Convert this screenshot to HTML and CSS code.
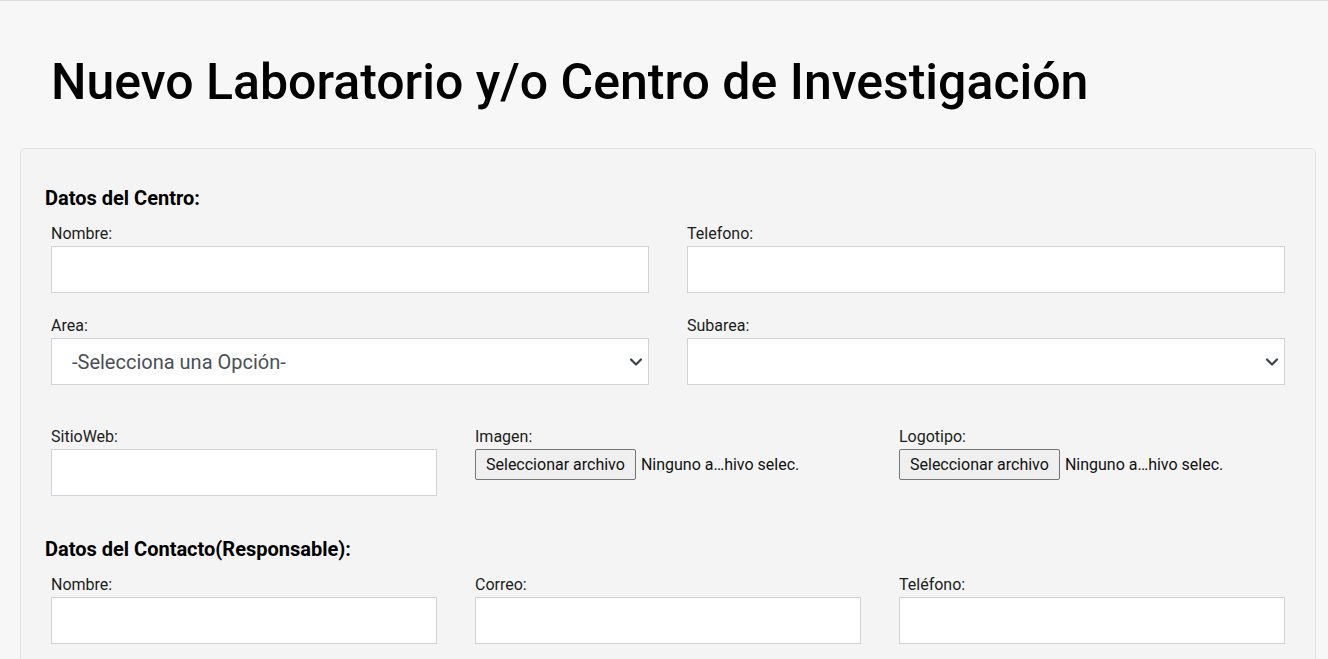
FILE: index.html
```html
<!DOCTYPE html>
<html lang="es">
<head>
<meta charset="utf-8">
<title>Nuevo Laboratorio</title>
<link rel="stylesheet" href="styles.css">
</head>
<body>
<div class="topline"></div>
<header class="page-head">
  <h1 class="title">Nuevo Laboratorio y/o Centro de Investigación</h1>
</header>
<main class="card">
  <h3 class="section-title">Datos del Centro:</h3>
  <div class="grid two">
    <div class="field"><label class="lbl">Nombre:</label><input class="ctl" type="text"></div>
    <div class="field"><label class="lbl">Telefono:</label><input class="ctl" type="text"></div>
  </div>
  <div class="grid two row-gap">
    <div class="field"><label class="lbl">Area:</label>
      <div class="ctl select"><span class="sel-text">-Selecciona una Opción-</span><svg class="chev" width="14" height="10" viewBox="0 0 14 10"><path d="M2 2.5 L7 7.5 L12 2.5" fill="none" stroke="#3d4348" stroke-width="2.2" stroke-linecap="round" stroke-linejoin="round"/></svg></div>
    </div>
    <div class="field"><label class="lbl">Subarea:</label>
      <div class="ctl select"><span class="sel-text"></span><svg class="chev" width="14" height="10" viewBox="0 0 14 10"><path d="M2 2.5 L7 7.5 L12 2.5" fill="none" stroke="#3d4348" stroke-width="2.2" stroke-linecap="round" stroke-linejoin="round"/></svg></div>
    </div>
  </div>
  <div class="grid three row-gap-lg">
    <div class="field"><label class="lbl">SitioWeb:</label><input class="ctl" type="text"></div>
    <div class="field"><label class="lbl">Imagen:</label>
      <div class="file"><span class="file-btn">Seleccionar archivo</span><span class="file-name">Ninguno a…hivo selec.</span></div>
    </div>
    <div class="field"><label class="lbl">Logotipo:</label>
      <div class="file"><span class="file-btn">Seleccionar archivo</span><span class="file-name">Ninguno a…hivo selec.</span></div>
    </div>
  </div>
  <h3 class="section-title second">Datos del Contacto(Responsable):</h3>
  <div class="grid three">
    <div class="field"><label class="lbl">Nombre:</label><input class="ctl" type="text"></div>
    <div class="field"><label class="lbl">Correo:</label><input class="ctl" type="text"></div>
    <div class="field"><label class="lbl">Teléfono:</label><input class="ctl" type="text"></div>
  </div>
</main>
</body>
</html>
```
FILE: styles.css
```css
html, body {
  margin: 0;
  padding: 0;
  background: #f7f7f7;
  font-family: Roboto, "Liberation Sans", Arial, sans-serif;
  color: #212529;
  overflow: hidden;
}
.topline {
  height: 1px;
  background: #d9dee5;
}
.page-head {
  padding: 50px 0 0 51px;
}
.title {
  margin: 0;
  font-size: 50px;
  font-weight: 500;
  line-height: 62px;
  color: #000;
}
.card {
  margin: 35px 12px 0 20px;
  background: #f4f4f4;
  border: 1px solid #e2e2e2;
  border-radius: 5px;
  padding: 37px 24px 30px;
  height: 600px;
  box-sizing: border-box;
}
.section-title {
  margin: 0 0 14px;
  font-size: 20px;
  font-weight: 700;
  line-height: 24px;
  color: #000;
}
.section-title.second {
  margin-top: 41px;
}
.grid {
  display: grid;
  column-gap: 38px;
  padding: 0 6px;
}
.grid.two { grid-template-columns: 1fr 1fr; }
.grid.three { grid-template-columns: 1fr 1fr 1fr; }
.row-gap { margin-top: 23px; }
.row-gap-lg { margin-top: 42px; }
.field {
  display: flex;
  flex-direction: column;
}
.lbl {
  display: block;
  font-size: 16px;
  line-height: 19px;
  margin-bottom: 3px;
  color: #1a1d20;
}
.ctl {
  box-sizing: border-box;
  height: 47px;
  width: 100%;
  margin: 0;
  border: 1px solid #cfd4da;
  border-radius: 0;
  background: #fff;
  font: inherit;
  outline: none;
}
.select {
  display: flex;
  align-items: center;
  justify-content: space-between;
  padding: 0 5px 0 20px;
}
.sel-text {
  font-size: 20px;
  color: #495057;
}
.chev {
  display: block;
}
.file {
  display: flex;
  align-items: center;
  height: 31px;
}
.file-btn {
  box-sizing: border-box;
  height: 31px;
  display: flex;
  align-items: center;
  padding: 0 10px;
  background: #efefef;
  border: 1px solid #767676;
  border-radius: 2px;
  font-size: 16px;
  color: #111;
}
.file-name {
  margin-left: 5px;
  font-size: 16px;
  color: #111;
}
```
